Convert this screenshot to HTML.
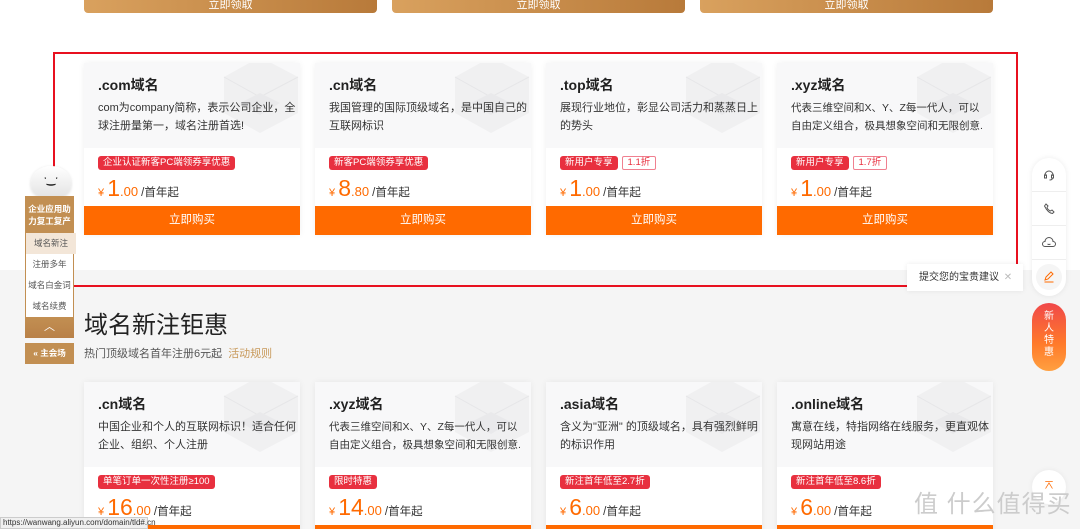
<!DOCTYPE html>
<html><head><meta charset="utf-8"><style>
*{margin:0;padding:0;box-sizing:border-box}
html,body{width:1080px;height:529px;overflow:hidden}
body{background:#f5f5f5;font-family:"Liberation Sans","Noto Sans CJK SC",sans-serif;position:relative;color:#333}
.top{position:absolute;left:0;top:0;width:1080px;height:270px;background:#fff}
.gb{position:absolute;top:-10px;height:23px;width:293px;border-radius:4px;background:linear-gradient(90deg,#d9a15e,#b87a3a);color:#fff;font-size:11px;text-align:center;line-height:30px}
.card{position:absolute;width:216px;background:#fff;box-shadow:0 0 6px rgba(0,0,0,.06);overflow:hidden}
.hd{height:85px;background:#f8f8f9;padding:13px 14px 0;position:relative}
.hd h3{font-size:14px;font-weight:bold;color:#222;line-height:18px;position:relative}
.hd p{font-size:11px;color:#333;line-height:18px;margin-top:5px;white-space:nowrap;position:relative}
.deco{position:absolute;right:0;top:0;width:80px;height:85px}
.tags{padding:8px 14px 0;height:24px}
.tag{display:inline-block;background:#e8303f;color:#fff;font-size:9.5px;line-height:14px;padding:0 5px;border-radius:3px;vertical-align:top}
.tag2{display:inline-block;border:1px solid #f08090;color:#e8303f;font-size:9.5px;line-height:12px;padding:0 5px;border-radius:2px;margin-left:4px;vertical-align:top}
.pr{padding:0 14px;height:34px;color:#ff6a00;font-size:11px;line-height:32px}
.pr b{font-weight:normal;font-size:23px}
.pr i{font-style:normal;font-size:13px}
.pr span{color:#333;font-size:11.5px}
.btn{height:29px;background:#ff6a00;color:#fff;font-size:11.5px;text-align:center;line-height:29px}
.redbox{position:absolute;left:53px;top:52px;width:965px;height:235px;border:2px solid #e8101f}
.side{position:absolute;left:25px;width:49px}
.rt{position:absolute;left:1032px;width:34px;background:#fff;border-radius:17px;box-shadow:0 0 6px rgba(0,0,0,.08)}
.ic{height:34px;display:flex;align-items:center;justify-content:center;border-bottom:1px solid #eee}
</style></head><body>
<div class="top"></div>
<div class="gb" style="left:84px">立即领取</div>
<div class="gb" style="left:392px">立即领取</div>
<div class="gb" style="left:700px">立即领取</div>

<svg width="0" height="0" style="position:absolute"><defs><g id="box"><path d="M4 14L40 -6 78 14 78 50 40 70 4 50Z" fill="#f0f0f1"/><path d="M4 14L40 34 78 14" fill="none" stroke="#e6e6e8"/><path d="M20 40L40 30 60 40 40 52Z" fill="#e9e9eb"/></g></defs></svg>

<div class="card" style="left:84px;top:63px"><div class="hd"><svg class="deco"><use href="#box"/></svg><h3>.com域名</h3><p>com为company简称，表示公司企业，全<br>球注册量第一，域名注册首选!</p></div><div class="tags"><span class="tag">企业认证新客PC端领券享优惠</span></div><div class="pr">¥ <b>1</b><i>.00</i> <span>/首年起</span></div><div class="btn">立即购买</div></div>
<div class="card" style="left:315px;top:63px"><div class="hd"><svg class="deco"><use href="#box"/></svg><h3>.cn域名</h3><p>我国管理的国际顶级域名，是中国自己的<br>互联网标识</p></div><div class="tags"><span class="tag">新客PC端领券享优惠</span></div><div class="pr">¥ <b>8</b><i>.80</i> <span>/首年起</span></div><div class="btn">立即购买</div></div>
<div class="card" style="left:546px;top:63px"><div class="hd"><svg class="deco"><use href="#box"/></svg><h3>.top域名</h3><p>展现行业地位，彰显公司活力和蒸蒸日上<br>的势头</p></div><div class="tags"><span class="tag">新用户专享</span><span class="tag2">1.1折</span></div><div class="pr">¥ <b>1</b><i>.00</i> <span>/首年起</span></div><div class="btn">立即购买</div></div>
<div class="card" style="left:777px;top:63px"><div class="hd"><svg class="deco"><use href="#box"/></svg><h3>.xyz域名</h3><p style="font-size:10.5px">代表三维空间和X、Y、Z每一代人，可以<br>自由定义组合，极具想象空间和无限创意.</p></div><div class="tags"><span class="tag">新用户专享</span><span class="tag2">1.7折</span></div><div class="pr">¥ <b>1</b><i>.00</i> <span>/首年起</span></div><div class="btn">立即购买</div></div>

<div style="position:absolute;left:84px;top:305px;font-size:24px;color:#222">域名新注钜惠</div>
<div style="position:absolute;left:84px;top:345px;font-size:11px;color:#555">热门顶级域名首年注册6元起 <span style="color:#c8995a;margin-left:3px">活动规则</span></div>

<div class="card" style="left:84px;top:382px"><div class="hd"><svg class="deco"><use href="#box"/></svg><h3>.cn域名</h3><p>中国企业和个人的互联网标识！适合任何<br>企业、组织、个人注册</p></div><div class="tags"><span class="tag">单笔订单一次性注册≥100</span></div><div class="pr">¥ <b>16</b><i>.00</i> <span>/首年起</span></div><div class="btn">立即购买</div></div>
<div class="card" style="left:315px;top:382px"><div class="hd"><svg class="deco"><use href="#box"/></svg><h3>.xyz域名</h3><p style="font-size:10.5px">代表三维空间和X、Y、Z每一代人，可以<br>自由定义组合，极具想象空间和无限创意.</p></div><div class="tags"><span class="tag">限时特惠</span></div><div class="pr">¥ <b>14</b><i>.00</i> <span>/首年起</span></div><div class="btn">立即购买</div></div>
<div class="card" style="left:546px;top:382px"><div class="hd"><svg class="deco"><use href="#box"/></svg><h3>.asia域名</h3><p>含义为"亚洲" 的顶级域名，具有强烈鲜明<br>的标识作用</p></div><div class="tags"><span class="tag">新注首年低至2.7折</span></div><div class="pr">¥ <b>6</b><i>.00</i> <span>/首年起</span></div><div class="btn">立即购买</div></div>
<div class="card" style="left:777px;top:382px"><div class="hd"><svg class="deco"><use href="#box"/></svg><h3>.online域名</h3><p>寓意在线，特指网络在线服务，更直观体<br>现网站用途</p></div><div class="tags"><span class="tag">新注首年低至8.6折</span></div><div class="pr">¥ <b>6</b><i>.00</i> <span>/首年起</span></div><div class="btn">立即购买</div></div>

<div class="redbox"></div>

<!-- left sidebar -->
<div style="position:absolute;left:31px;top:166px;width:40px;height:32px;border-radius:50% 50% 40% 40%;background:linear-gradient(#fff,#e3e3e3);box-shadow:0 1px 3px rgba(0,0,0,.15);font-size:10px;text-align:center;line-height:30px;color:#222;font-weight:bold">ˑ‿ˑ</div>
<div class="side" style="top:196px;height:37px;background:#c28f52;color:#fff;font-size:8.5px;font-weight:bold;text-align:center;line-height:12px;padding-top:7px">企业应用助<br>力复工复产</div>
<div class="side" style="top:233px;height:84px;background:#fff;border:1px solid #c28f52;border-top:0;border-bottom:0;font-size:8.5px;color:#555;text-align:center">
<div style="height:21px;line-height:21px;background:#f3e6d8;margin-right:-3px">域名新注</div><div style="height:21px;line-height:21px">注册多年</div><div style="height:21px;line-height:21px">域名白金词</div><div style="height:21px;line-height:21px">域名续费</div></div>
<div class="side" style="top:317px;height:21px;background:linear-gradient(#c28f52,#b98148);color:#fff;text-align:center;font-size:11px;line-height:21px">︿</div>
<div class="side" style="top:343px;height:21px;background:#c28f52;color:#fff;text-align:center;font-size:8.5px;font-weight:bold;line-height:21px">« 主会场</div>

<!-- right -->
<div class="rt" style="top:158px;height:138px">
<div class="ic"><svg width="12" height="12" viewBox="0 0 12 12" fill="none" stroke="#555" stroke-width="1"><path d="M2 7V6a4 4 0 018 0v1"/><rect x="1.5" y="6" width="2" height="3"/><rect x="8.5" y="6" width="2" height="3"/><path d="M9.5 9q0 2-3 2"/></svg></div>
<div class="ic"><svg width="12" height="12" viewBox="0 0 12 12" fill="none" stroke="#555" stroke-width="1"><path d="M3 1l2 2-1 1.5q1 2.5 3.5 3.5L9 7l2 2-1.5 1.5Q5 10 1.5 3z"/></svg></div>
<div class="ic"><svg width="14" height="11" viewBox="0 0 14 11" fill="none" stroke="#555" stroke-width="1"><path d="M3 9.5a2.5 2.5 0 010-5 4 4 0 018 0 2.5 2.5 0 010 5z"/><path d="M5.5 7q1.5 1 3 0"/></svg></div>
<div class="ic" style="border:0"><div style="width:26px;height:26px;border-radius:50%;background:#f5f5f5;display:flex;align-items:center;justify-content:center"><svg width="12" height="12" viewBox="0 0 12 12" fill="none" stroke="#ff6a00" stroke-width="1"><path d="M2 9l1-3 5-5 2 2-5 5zM1.5 11h9"/></svg></div></div>
</div>
<div style="position:absolute;left:907px;top:264px;width:116px;height:27px;background:#fff;box-shadow:0 0 5px rgba(0,0,0,.08);font-size:10px;color:#333;line-height:28px;padding-left:12px">提交您的宝贵建议 <span style="color:#bbb;margin-left:2px">✕</span></div>
<div style="position:absolute;left:1032px;top:303px;width:34px;height:68px;border-radius:17px;background:linear-gradient(#f0484a,#ff7a2a 60%,#ffa040);color:#fff;font-size:10px;line-height:12px;text-align:center;padding-top:8px">新<br>人<br>特<br>惠</div>
<div style="position:absolute;left:1032px;top:470px;width:34px;height:34px;border-radius:50%;background:#fff;box-shadow:0 0 6px rgba(0,0,0,.06);color:#ff6a00;text-align:center;font-size:12px;line-height:30px">⌅</div>
<div style="position:absolute;left:914px;top:484px;font-size:24px;color:#ccc;letter-spacing:1px">值 什么值得买</div>
<div style="position:absolute;left:0;top:517px;width:148px;height:12px;background:#f0f0f0;border:1px solid #ccc;font-size:8px;color:#333;line-height:10px;padding-left:2px">https://wanwang.aliyun.com/domain/tld#.cn</div>
</body></html>
